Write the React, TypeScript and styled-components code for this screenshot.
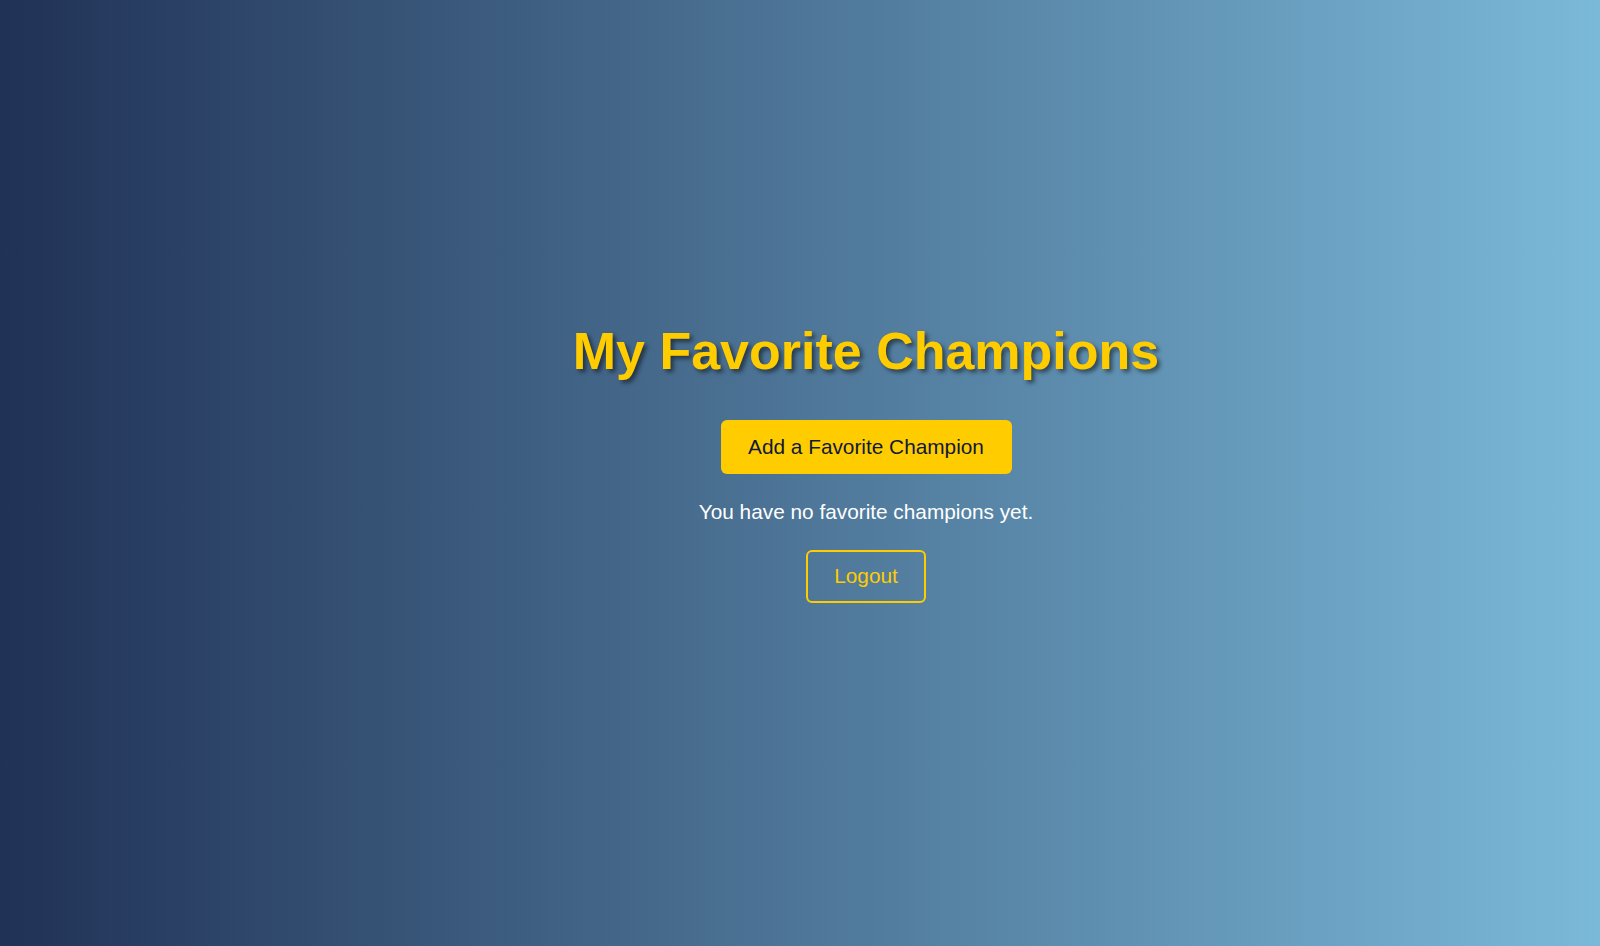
import React from "react";
import styled, { createGlobalStyle } from "styled-components";

const Global = createGlobalStyle`
  html, body { margin: 0; padding: 0; }
  body { font-family: "Liberation Sans", Arial, sans-serif; }
`;

const Page = styled.div`
  min-height: 946px;
  box-sizing: border-box;
  background: linear-gradient(to right, #203256, #7bb9d9);
  display: flex;
  flex-direction: column;
  align-items: center;
  justify-content: center;
  padding-left: 132px;
  padding-bottom: 23px;
`;

const Title = styled.h1`
  margin: 0 0 39px;
  font-size: 52px;
  font-weight: 700;
  color: #ffcc00;
  text-shadow: 3px 3px 4px rgba(0, 0, 0, 0.5);
`;

const PrimaryButton = styled.button`
  font-family: "Liberation Sans", Arial, sans-serif;
  font-size: 20.8px;
  color: #10193a;
  background: #ffcc00;
  border: none;
  border-radius: 6px;
  width: 291px;
  height: 54px;
  cursor: pointer;
`;

const Message = styled.p`
  margin: 26px 0 26px;
  font-size: 20.8px;
  color: #ffffff;
`;

const OutlineButton = styled.button`
  font-family: "Liberation Sans", Arial, sans-serif;
  font-size: 20.8px;
  color: #ffcc00;
  background: transparent;
  border: 2px solid #ffcc00;
  border-radius: 6px;
  width: 120px;
  height: 53px;
  cursor: pointer;
`;

export default function App() {
  return (
    <>
      <Global />
      <Page>
        <Title>My Favorite Champions</Title>
        <PrimaryButton>Add a Favorite Champion</PrimaryButton>
        <Message>You have no favorite champions yet.</Message>
        <OutlineButton>Logout</OutlineButton>
      </Page>
    </>
  );
}
